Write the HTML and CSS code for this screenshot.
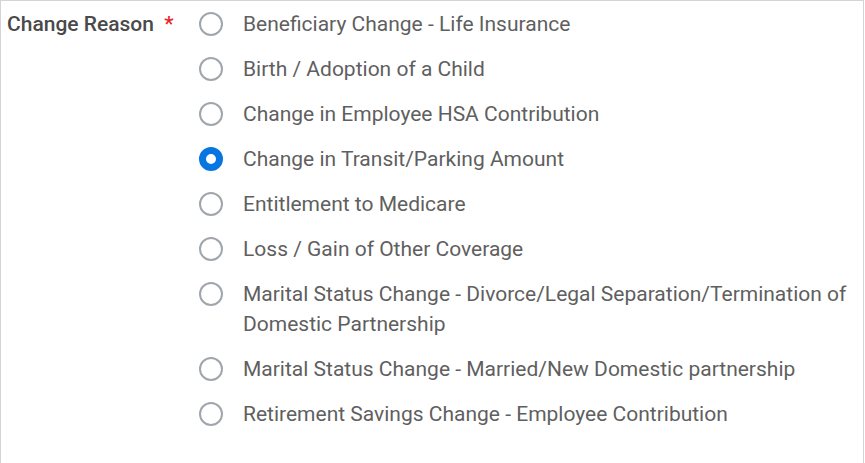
FILE: index.html
```html
<!DOCTYPE html>
<html lang="en">
<head>
    <meta charset="UTF-8">
    <title>Change Reason</title>
    <link rel="stylesheet" href="styles.css">
</head>
<body>
    <div class="field">
        <div class="field-label">Change Reason <span class="required">*</span></div>
        <div class="options">
            <label class="option"><span class="radio"></span><span class="option-text">Beneficiary Change - Life Insurance</span></label>
            <label class="option"><span class="radio"></span><span class="option-text">Birth / Adoption of a Child</span></label>
            <label class="option"><span class="radio"></span><span class="option-text">Change in Employee HSA Contribution</span></label>
            <label class="option"><span class="radio checked"></span><span class="option-text">Change in Transit/Parking Amount</span></label>
            <label class="option"><span class="radio"></span><span class="option-text">Entitlement to Medicare</span></label>
            <label class="option"><span class="radio"></span><span class="option-text">Loss / Gain of Other Coverage</span></label>
            <label class="option"><span class="radio"></span><span class="option-text">Marital Status Change - Divorce/Legal Separation/Termination of Domestic Partnership</span></label>
            <label class="option"><span class="radio"></span><span class="option-text">Marital Status Change - Married/New Domestic partnership</span></label>
            <label class="option"><span class="radio"></span><span class="option-text">Retirement Savings Change - Employee Contribution</span></label>
        </div>
    </div>
</body>
</html>
```

FILE: styles.css
```css
body {
    margin: 0;
    background: #ffffff;
    font-family: Roboto, 'Liberation Sans', sans-serif;
}

.field {
    display: flex;
    width: 864px;
    height: 480px;
    box-sizing: border-box;
    border: 1px solid #d4d4d4;
    border-bottom: none;
    padding: 8px 0 0 6px;
}

.field-label {
    width: 192px;
    flex-shrink: 0;
    font-size: 21px;
    line-height: 30px;
    font-weight: 500;
    color: #4a4a4a;
}

.required {
    color: #e8242b;
    margin-left: 5px;
}

.options {
    display: flex;
    flex-direction: column;
    gap: 15px;
    width: 660px;
}

.option {
    display: flex;
    align-items: flex-start;
    gap: 20px;
}

.radio {
    width: 24px;
    height: 24px;
    flex-shrink: 0;
    margin-top: 3px;
    box-sizing: border-box;
    border: 2px solid #a0a6ad;
    border-radius: 50%;
    background: #ffffff;
}

.radio.checked {
    border: 7px solid #0875e1;
}

.option-text {
    font-size: 21px;
    line-height: 30px;
    color: #5f5f5f;
}
```
